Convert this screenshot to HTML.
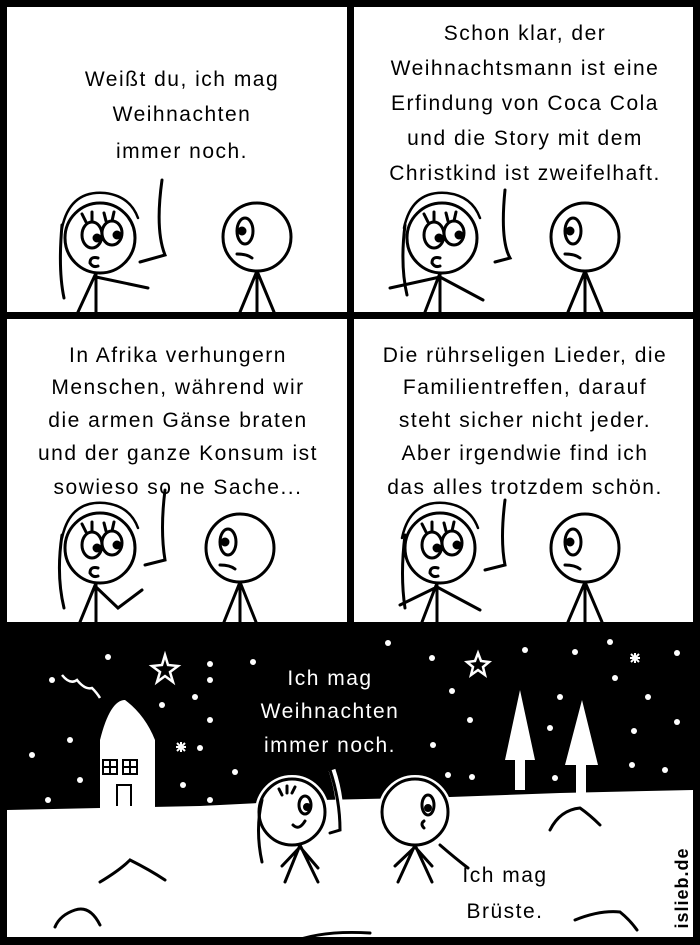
<!DOCTYPE html>
<html><head><meta charset="utf-8"><style>
body{margin:0;background:#000;width:700px;height:945px;overflow:hidden}
svg{display:block}
text{font-family:"Liberation Sans",sans-serif;font-size:21px;text-anchor:middle;letter-spacing:1.5px}
</style></head><body>
<svg width="700" height="945" viewBox="0 0 700 945">
<defs>
<g id="gf" fill="none" stroke="#000" stroke-width="3" stroke-linecap="round">
<path d="M-38 -10 Q-30 -48 5 -45 Q30 -42 38 -20" stroke-width="2.5"/>
<ellipse cx="-8" cy="-3" rx="10" ry="13" fill="#fff"/>
<ellipse cx="12" cy="-5" rx="10" ry="12" fill="#fff"/>
<circle cx="-3" cy="0" r="3" fill="#000"/><circle cx="17" cy="-3" r="3" fill="#000"/>
<path d="M-14 -16 l-4 -8 M-8 -17 v-9 M6 -17 l-2 -8 M12 -17 l2 -9"/>
<path d="M-2 20 q-8 -2 -8 5 q3 5 8 3"/>
</g>
<g id="bf" fill="none" stroke="#000" stroke-width="3" stroke-linecap="round">
<ellipse cx="-12" cy="-6" rx="8" ry="13"/>
<circle cx="-15" cy="-6" r="3" fill="#000"/>
<path d="M-20 17 q10 0 15 4"/>
</g>
</defs>
<rect width="700" height="945" fill="#000"/>
<rect x="7" y="7" width="340" height="305" fill="#fff"/>
<rect x="354" y="7" width="339" height="305" fill="#fff"/>
<rect x="7" y="319" width="340" height="303" fill="#fff"/>
<rect x="354" y="319" width="339" height="303" fill="#fff"/>
<g fill="#000">
<text x="182" y="86">Weißt du, ich mag</text>
<text x="182" y="121">Weihnachten</text>
<text x="182" y="158">immer noch.</text>
<text x="525" y="40">Schon klar, der</text>
<text x="525" y="75">Weihnachtsmann ist eine</text>
<text x="525" y="110">Erfindung von Coca Cola</text>
<text x="525" y="145">und die Story mit dem</text>
<text x="525" y="180">Christkind ist zweifelhaft.</text>
<text x="178" y="362">In Afrika verhungern</text>
<text x="178" y="394">Menschen, während wir</text>
<text x="178" y="427">die armen Gänse braten</text>
<text x="178" y="460">und der ganze Konsum ist</text>
<text x="178" y="494">sowieso so ne Sache...</text>
<text x="525" y="362">Die rührseligen Lieder, die</text>
<text x="525" y="394">Familientreffen, darauf</text>
<text x="525" y="427">steht sicher nicht jeder.</text>
<text x="525" y="460">Aber irgendwie find ich</text>
<text x="525" y="494">das alles trotzdem schön.</text>
</g>
<g fill="none" stroke="#000" stroke-width="3" stroke-linecap="round">
<circle cx="100" cy="238" r="35"/><circle cx="257" cy="237" r="34"/>
<path d="M62 225 Q58 270 64 298 M96 273 L78 312 M96 273 V312 M96 277 L148 288 M162 180 Q155 230 165 255 L140 262"/>
<path d="M257 271 L240 312 M257 271 V312 M257 271 L274 312"/>
<circle cx="442" cy="238" r="35"/><circle cx="585" cy="237" r="34"/>
<path d="M405 225 Q400 265 407 295 M440 273 L425 312 M440 273 V312 M440 277 L390 288 M440 277 L483 300 M505 190 Q500 240 510 258 L495 262"/>
<path d="M585 271 L568 312 M585 271 V312 M585 271 L602 312"/>
<circle cx="100" cy="548" r="35"/><circle cx="240" cy="548" r="34"/>
<path d="M62 535 Q56 575 64 608 M96 583 L80 622 M96 583 V622 M96 587 L118 608 L142 590 M165 490 Q160 530 165 560 L145 565"/>
<path d="M240 582 L224 622 M240 582 V622 M240 582 L256 622"/>
<circle cx="440" cy="548" r="35"/><circle cx="585" cy="548" r="34"/>
<path d="M405 535 Q400 575 405 608 M437 583 L422 622 M437 583 V622 M437 587 L400 605 M437 587 L480 610 M505 500 Q500 540 505 565 L485 570"/>
<path d="M585 582 L568 622 M585 582 V622 M585 582 L602 622"/>
</g>
<use href="#gf" x="100" y="238"/><use href="#bf" x="257" y="237"/>
<use href="#gf" x="442" y="238"/><use href="#bf" x="585" y="237"/>
<use href="#gf" x="100" y="548"/><use href="#bf" x="585" y="548"/>
<use href="#gf" x="440" y="548"/><use href="#bf" x="240" y="548"/>
<path d="M7 810 L100 808 L200 806 L320 800 L450 797 L560 793 L693 790 L693 937 L7 937 Z" fill="#fff"/>
<g fill="#fff">
<path d="M100 808 V740 Q110 700 125 700 Q145 715 155 740 V808 Z"/>
<path d="M505 760 L520 690 L535 760 Z M515 760 h10 v30 h-10z M565 765 L582 700 L598 765 Z M576 765 h10 v28 h-10z"/>
<text x="330" y="685" fill="#fff">Ich mag</text>
<text x="330" y="718" fill="#fff">Weihnachten</text>
<text x="330" y="752" fill="#fff">immer noch.</text>
<circle cx="52" cy="680" r="3"/><circle cx="108" cy="657" r="3"/><circle cx="210" cy="664" r="3"/><circle cx="253" cy="662" r="3"/>
<circle cx="210" cy="680" r="3"/><circle cx="195" cy="697" r="3"/><circle cx="162" cy="705" r="3"/><circle cx="70" cy="740" r="3"/>
<circle cx="32" cy="755" r="3"/><circle cx="80" cy="780" r="3"/><circle cx="48" cy="800" r="3"/><circle cx="210" cy="720" r="3"/>
<circle cx="183" cy="785" r="3"/><circle cx="210" cy="800" r="3"/><circle cx="200" cy="748" r="3"/><circle cx="235" cy="772" r="3"/>
<circle cx="388" cy="643" r="3"/><circle cx="432" cy="658" r="3"/><circle cx="452" cy="691" r="3"/><circle cx="433" cy="745" r="3"/>
<circle cx="448" cy="775" r="3"/><circle cx="472" cy="777" r="3"/><circle cx="525" cy="650" r="3"/><circle cx="575" cy="652" r="3"/>
<circle cx="610" cy="642" r="3"/><circle cx="615" cy="678" r="3"/><circle cx="648" cy="697" r="3"/><circle cx="677" cy="653" r="3"/>
<circle cx="560" cy="697" r="3"/><circle cx="550" cy="728" r="3"/><circle cx="634" cy="731" r="3"/><circle cx="677" cy="722" r="3"/>
<circle cx="665" cy="770" r="3"/><circle cx="632" cy="765" r="3"/><circle cx="470" cy="720" r="3"/><circle cx="555" cy="778" r="3"/>
</g>
<g fill="none" stroke="#fff" stroke-width="2.5">
<path d="M165 655 l3 10 l10 1 l-8 6 l3 10 l-8 -6 l-8 6 l3 -10 l-8 -6 l10 -1z"/>
<path d="M478 653 l3 8 l8 1 l-6 5 l2 8 l-7 -5 l-7 5 l2 -8 l-6 -5 l8 -1z"/>
<path d="M62 675 q8 10 15 5 q8 10 15 8 q5 5 8 10"/>
<path d="M181 742 v10 M176 747 h10 M177 743 l8 8 M185 743 l-8 8 M635 653 v10 M630 658 h10 M631 654 l8 8 M639 654 l-8 8" stroke-width="2"/>
</g>
<g fill="none" stroke="#000" stroke-width="2">
<path d="M103 760 h14 v14 h-14z M110 760 v14 M103 767 h14 M123 760 h14 v14 h-14z M130 760 v14 M123 767 h14 M117 806 V785 h14 v21"/>
</g>
<g fill="#fff" stroke="#fff" stroke-width="8">
<circle cx="292" cy="812" r="33"/><circle cx="415" cy="812" r="33"/>
<path d="M332 770 Q342 800 340 832" fill="none" stroke-width="7"/>
</g>
<g fill="none" stroke="#000" stroke-width="3" stroke-linecap="round">
<circle cx="292" cy="812" r="33" fill="#fff"/><circle cx="415" cy="812" r="33" fill="#fff"/>
<path d="M262 800 Q255 830 262 862 M300 845 L285 882 M300 845 L318 882 M300 847 L282 866 M300 847 L318 868"/>
<path d="M415 845 L398 882 M415 845 L432 882 M415 847 L395 866 M415 847 L432 866"/>
<path d="M330 770 Q340 800 340 830 L330 833 M440 845 Q455 858 468 868"/>
<path d="M282 795 l-3 -6 M287 793 l0 -7 M292 793 l3 -6"/>
<ellipse cx="305" cy="805" rx="6" ry="9"/><circle cx="307" cy="807" r="2.5" fill="#000"/>
<path d="M293 825 q6 6 12 -4"/>
<ellipse cx="428" cy="805" rx="6" ry="10"/><circle cx="428" cy="808" r="2.5" fill="#000"/>
<path d="M424 828 q-4 -4 0 -7"/>
<path d="M55 927 Q60 915 75 910 Q90 905 100 925 M550 830 Q560 810 580 808 Q590 815 600 825 M575 920 Q600 910 620 912 Q630 920 637 930 M100 882 Q120 870 130 860 Q150 870 165 880 M290 943 Q320 930 370 933"/>
</g>
<g fill="#000">
<text x="505" y="882">Ich mag</text>
<text x="505" y="918">Brüste.</text>
<text x="0" y="0" transform="translate(688,888) rotate(-90)" style="font-size:18px;font-weight:bold;letter-spacing:1px">islieb.de</text>
</g>
</svg>
</body></html>
